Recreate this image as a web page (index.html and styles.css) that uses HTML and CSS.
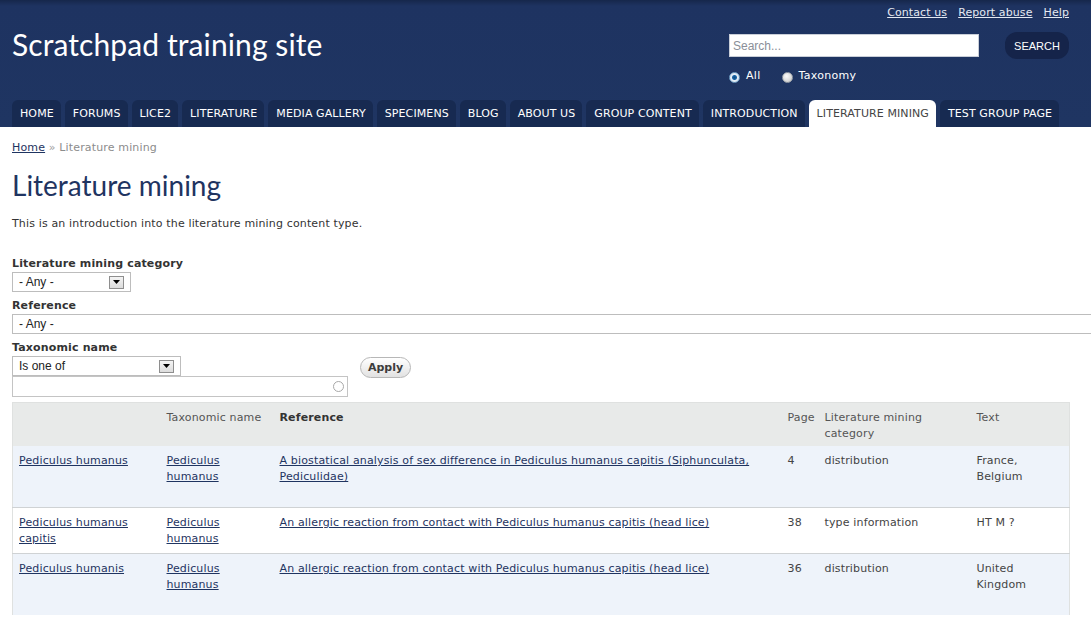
FILE: index.html
```
<!DOCTYPE html>
<html lang="en">
<head>
<meta charset="utf-8">
<title>Literature mining | Scratchpad training site</title>
<link rel="stylesheet" href="styles.css">
</head>
<body>
<header class="site-header">
  <div class="header-top">
    <div class="brand">Scratchpad training site</div>
    <div class="header-right">
      <nav class="secondary-links">
        <a href="#">Contact us</a>
        <a href="#">Report abuse</a>
        <a href="#">Help</a>
      </nav>
      <form class="search">
        <div class="search-row">
          <input class="search-input" type="text" placeholder="Search...">
          <button class="search-btn" type="button">SEARCH</button>
        </div>
        <div class="radios">
          <span class="radio checked"></span><span class="radio-label">All</span>
          <span class="radio"></span><span class="radio-label">Taxonomy</span>
        </div>
      </form>
    </div>
  </div>
  <nav class="tabs">
    <a class="tab" href="#">HOME</a>
    <a class="tab" href="#">FORUMS</a>
    <a class="tab" href="#">LICE2</a>
    <a class="tab" href="#">LITERATURE</a>
    <a class="tab" href="#">MEDIA GALLERY</a>
    <a class="tab" href="#">SPECIMENS</a>
    <a class="tab" href="#">BLOG</a>
    <a class="tab" href="#">ABOUT US</a>
    <a class="tab" href="#">GROUP CONTENT</a>
    <a class="tab" href="#">INTRODUCTION</a>
    <a class="tab active" href="#">LITERATURE MINING</a>
    <a class="tab" href="#">TEST GROUP PAGE</a>
  </nav>
</header>

<main class="content">
  <div class="breadcrumb"><a href="#">Home</a> <span class="sep">»</span> Literature mining</div>
  <h1 class="page-title">Literature mining</h1>
  <p class="intro">This is an introduction into the literature mining content type.</p>

  <div class="filters">
    <div class="filter">
      <div class="filter-label">Literature mining category</div>
      <div class="select select-cat"><span class="select-text">- Any -</span><span class="select-arrow"><svg width="7" height="4" viewBox="0 0 7 4"><path d="M0 0h7L3.5 4z" fill="#000"/></svg></span></div>
    </div>
    <div class="filter">
      <div class="filter-label">Reference</div>
      <div class="select select-ref"><span class="select-text">- Any -</span></div>
    </div>
    <div class="filter-row">
      <div class="filter">
        <div class="filter-label">Taxonomic name</div>
        <div class="select select-op"><span class="select-text">Is one of</span><span class="select-arrow"><svg width="7" height="4" viewBox="0 0 7 4"><path d="M0 0h7L3.5 4z" fill="#000"/></svg></span></div>
        <div class="autocomplete"><span class="throbber"></span></div>
      </div>
      <button class="apply" type="button">Apply</button>
    </div>
  </div>

  <table class="results">
    <colgroup>
      <col class="c1"><col class="c2"><col class="c3"><col class="c4"><col class="c5"><col class="c6">
    </colgroup>
    <thead>
      <tr>
        <th></th>
        <th>Taxonomic name</th>
        <th class="sorted">Reference</th>
        <th>Page</th>
        <th>Literature mining category</th>
        <th>Text</th>
      </tr>
    </thead>
    <tbody>
      <tr class="odd">
        <td><a href="#">Pediculus humanus</a></td>
        <td><a href="#">Pediculus humanus</a></td>
        <td><a href="#">A biostatical analysis of sex difference in Pediculus humanus capitis (Siphunculata, Pediculidae)</a></td>
        <td>4</td>
        <td>distribution</td>
        <td><p class="cell-text">France, Belgium</p></td>
      </tr>
      <tr class="even">
        <td><a href="#">Pediculus humanus capitis</a></td>
        <td><a href="#">Pediculus humanus</a></td>
        <td><a href="#">An allergic reaction from contact with Pediculus humanus capitis (head lice)</a></td>
        <td>38</td>
        <td>type information</td>
        <td><p class="cell-text">HT M ?</p></td>
      </tr>
      <tr class="odd">
        <td><a href="#">Pediculus humanis</a></td>
        <td><a href="#">Pediculus humanus</a></td>
        <td><a href="#">An allergic reaction from contact with Pediculus humanus capitis (head lice)</a></td>
        <td>36</td>
        <td>distribution</td>
        <td><p class="cell-text">United Kingdom</p></td>
      </tr>
    </tbody>
  </table>
</main>
</body>
</html>
```

FILE: styles.css
```
html {
  overflow-x: hidden;
}
body {
  margin: 0;
  font-family: "DejaVu Sans", Verdana, sans-serif;
  font-size: 11px;
  line-height: 16px;
  letter-spacing: 0.15px;
  color: #333;
  background: #fff;
}

/* ---------- header ---------- */
.site-header {
  background: linear-gradient(to bottom, #16274b 0, #1e3361 6px, #1f3562 100%);
  padding: 0 22px 0 12px;
}
.header-top {
  display: flex;
  justify-content: space-between;
  height: 100px;
}
.brand {
  font-family: Lato, "Open Sans", sans-serif;
  font-size: 30px;
  line-height: 36px;
  letter-spacing: 0.1px;
  color: #fff;
  padding-top: 26px;
}
.header-right {
  display: flex;
  flex-direction: column;
  align-items: flex-end;
}
.secondary-links {
  display: flex;
  gap: 11px;
  padding-top: 5px;
  line-height: 16px;
  letter-spacing: 0.1px;
}
.secondary-links a {
  color: #e4e9f2;
  text-decoration: underline;
}
.search {
  width: 340px;
  margin-top: 11px;
}
.search-row {
  display: flex;
  justify-content: space-between;
  align-items: center;
}
.search-input {
  box-sizing: border-box;
  width: 250px;
  height: 23px;
  border: 1px solid #c9ced8;
  padding: 0 3px;
  font-family: "Liberation Sans", Arial, sans-serif;
  font-size: 12px;
  color: #333;
  outline: none;
}
.search-input::placeholder {
  color: #8a8f98;
}
.search-btn {
  width: 64px;
  height: 27px;
  border: 0;
  border-radius: 12px;
  background: #15244a;
  color: #fff;
  font-family: "Liberation Sans", Arial, sans-serif;
  font-size: 11px;
  padding: 0;
}
.radios {
  display: flex;
  align-items: center;
  margin-top: 9px;
  color: #fff;
  line-height: 16px;
  letter-spacing: 0.3px;
}
.radio {
  box-sizing: border-box;
  width: 11px;
  height: 11px;
  border-radius: 50%;
  border: 1px solid #9aa0a8;
  background: radial-gradient(circle at 40% 35%, #fafafa 0, #d9d9d9 60%, #b8b8b8 100%);
  margin-top: 2px;
}
.radio.checked {
  border-color: #6f9ec4;
  background: radial-gradient(circle, #0e4d86 0, #1763a3 2px, #e4eef7 3px, #cfdbe6 100%);
}
.radio-label {
  margin-left: 6px;
  margin-right: 21px;
}

.tabs {
  display: flex;
  gap: 4px;
  height: 27px;
}
.tab {
  display: flex;
  align-items: center;
  padding: 0 7px 0 8px;
  background: #172a51;
  color: #fff;
  text-decoration: none;
  border-radius: 6px 6px 0 0;
  font-size: 11px;
  letter-spacing: 0.1px;
}
.tab.active {
  background: #fff;
  color: #444;
}

/* ---------- content ---------- */
.content {
  padding: 13px 22px 0 12px;
}
.breadcrumb {
  color: #8c8c8c;
}
.breadcrumb a {
  color: #1f3461;
}
.breadcrumb .sep {
  color: #a0a0a0;
}
.page-title {
  font-family: Lato, "Open Sans", sans-serif;
  font-weight: normal;
  font-size: 28px;
  line-height: 34px;
  letter-spacing: 0;
  color: #1f3461;
  margin: 12px 0 0;
}
.intro {
  margin: 14px 0 0;
  color: #333;
}

.filters {
  margin-top: 24px;
}
.filter-label {
  font-weight: bold;
  color: #333;
}
.filter + .filter {
  margin-top: 6px;
}
.filter-row {
  display: flex;
  align-items: flex-start;
  gap: 12px;
  margin-top: 6px;
}
.select {
  box-sizing: border-box;
  display: flex;
  align-items: center;
  justify-content: space-between;
  height: 20px;
  border: 1px solid #bdbdbd;
  background: #fff;
  font-family: "Liberation Sans", Arial, sans-serif;
  font-size: 12px;
  letter-spacing: 0;
  color: #222;
  padding: 0 6px 0 6px;
}
.select-cat {
  width: 119px;
}
.select-ref {
  width: 1100px;
}
.select-op {
  width: 169px;
}
.select-arrow {
  box-sizing: border-box;
  display: flex;
  align-items: center;
  justify-content: center;
  width: 15px;
  height: 13px;
  border: 1px solid #8e8e8e;
  background: linear-gradient(#f4f4f4, #dcdcdc);
}
.select-arrow svg {
  display: block;
}
.autocomplete {
  box-sizing: border-box;
  width: 336px;
  height: 21px;
  border: 1px solid #c4c4c4;
  display: flex;
  align-items: center;
  justify-content: flex-end;
  padding-right: 3px;
}
.throbber {
  box-sizing: border-box;
  width: 11px;
  height: 11px;
  border-radius: 50%;
  border: 1px solid #a8a8a8;
  background: #fff;
}
.apply {
  margin-top: 17px;
  width: 51px;
  height: 21px;
  border: 1px solid #b7b7b7;
  border-radius: 11px;
  background: linear-gradient(#ffffff, #e2e2e2);
  font-family: "DejaVu Sans", Verdana, sans-serif;
  font-size: 11px;
  font-weight: bold;
  color: #3c3c3c;
  padding: 0;
}

/* ---------- table ---------- */
.results {
  margin-top: 5px;
  width: 1057px;
  border-collapse: collapse;
  table-layout: fixed;
  border: 1px solid #dfe1e0;
  border-bottom: 0;
}
.c1 { width: 148px; }
.c2 { width: 113px; }
.c3 { width: 508px; }
.c4 { width: 37px; }
.c5 { width: 152px; }
.c6 { width: 99px; }
.results th {
  background: #e8eae9;
  font-weight: normal;
  color: #555;
  text-align: left;
  vertical-align: top;
  padding: 7px 6px 4px;
}
.results th.sorted {
  font-weight: bold;
  color: #333;
}
.results td {
  vertical-align: top;
  padding: 7px 6px 6px;
  color: #444;
  border-bottom: 1px solid #cfd2d4;
}
.results tbody tr:last-child td {
  border-bottom: 0;
}
.results tr.odd td {
  background: #eef3fa;
}
.results tr.even td {
  background: #fff;
}
.results a {
  color: #1f3461;
  text-decoration: underline;
}
.cell-text {
  margin: 0 0 16px;
}
```
